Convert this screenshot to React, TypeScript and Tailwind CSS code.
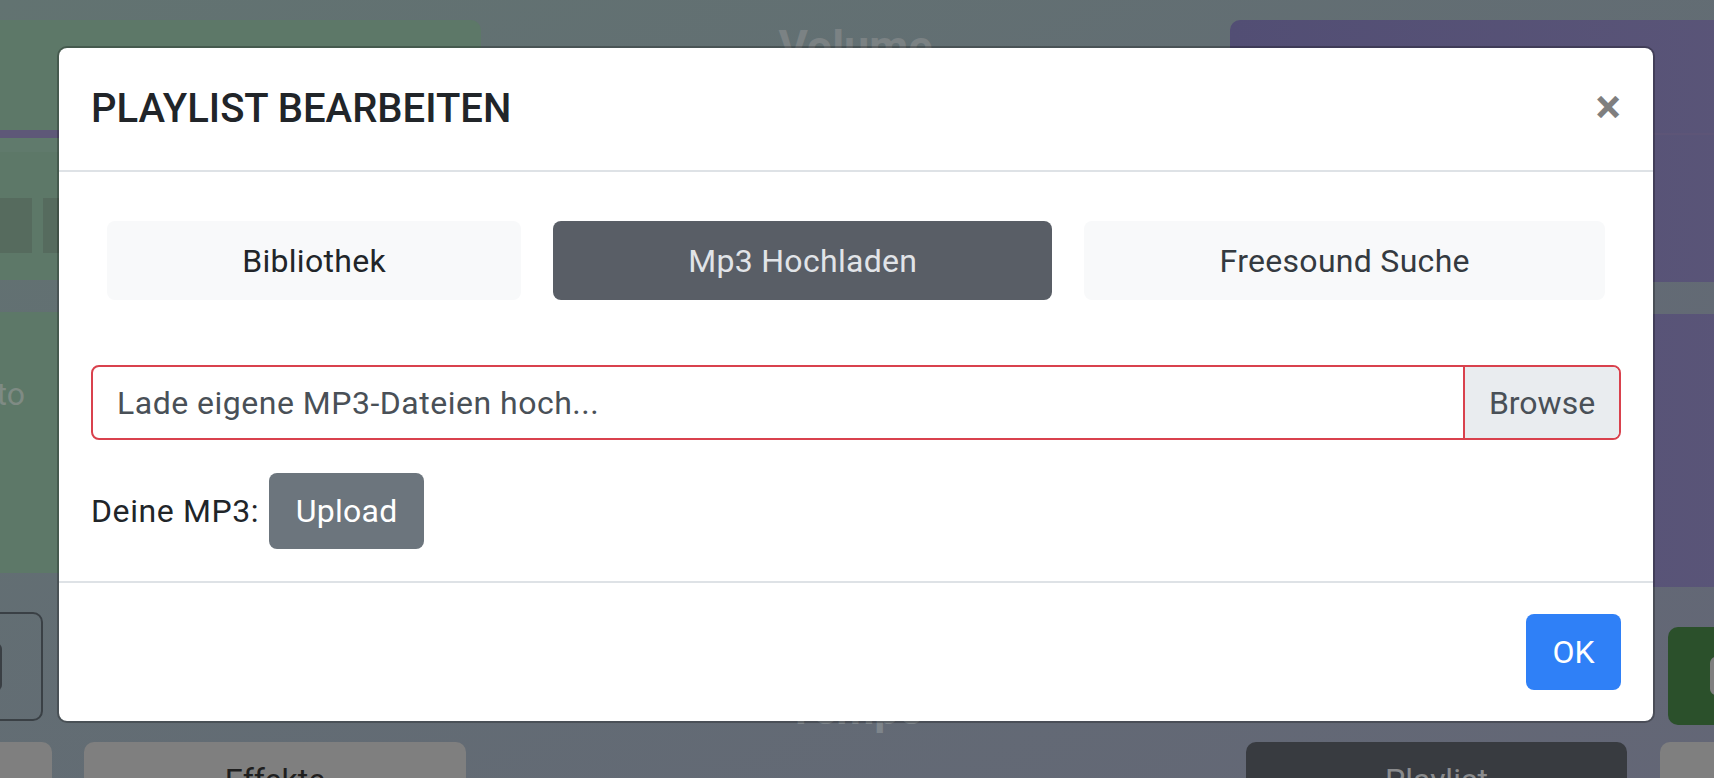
import React from "react";

function Background() {
  return (
    <div className="ml-[-10px] flex w-[1780px] pt-[20px]">
      {/* left column */}
      <div className="flex w-[491px] flex-col">
        <div className="flex h-[260px] flex-col rounded-tr-[10px] rounded-br-[10px] bg-[#5d7868]">
          <div className="mt-[110px] h-[8px] w-full bg-[#5e5878]" />
          <div className="h-[14px] w-full bg-[#607a6c]" />
          <div className="mt-[46px] flex gap-[11px]">
            <div className="h-[55px] w-[42px] bg-[#566b5e]" />
            <div className="h-[55px] w-[60px] bg-[#566b5e]" />
          </div>
        </div>
        <div className="mt-[32px] flex h-[261px] flex-col rounded-r-[10px] bg-[#5d7868]">
          <div className="mt-[66px] flex w-[35px] justify-end overflow-hidden">
            <span className="whitespace-nowrap text-[32px] leading-none text-[#7f8b84]">Auto</span>
          </div>
        </div>
        <div className="mt-[39px] flex h-[109px] w-[53px] items-center rounded-[10px] border-2 border-[#3a4045]">
          <div className="h-[48px] w-[10px] rounded-r-[6px] bg-[#3a3f44]" />
        </div>
        <div className="mt-[21px] flex gap-[32px]">
          <div className="h-[60px] w-[62px] rounded-[10px] bg-[#7f7f7f]" />
          <div className="flex h-[60px] w-[382px] justify-center rounded-[10px] bg-[#7f7f7f] pt-[22px] text-[32px] leading-none text-[#1f1f1f]">
            Effekte
          </div>
        </div>
      </div>
      {/* middle column */}
      <div className="flex w-[749px] flex-col items-center">
        <div className="mt-[4px] text-[45px] font-bold leading-none text-[#7b8284]">Volume</div>
        <div className="mt-[618px] text-[44px] font-bold leading-none text-[#7e858b]">Tempo</div>
      </div>
      {/* right column */}
      <div className="flex w-[540px] flex-col">
        <div className="flex h-[262px] flex-col rounded-tl-[10px] bg-gradient-to-r from-[#524e74] to-[#5a5578]">
          <div className="mt-[113px] h-[2px] w-full bg-[#5d5577]" />
        </div>
        <div className="mt-[32px] h-[273px] rounded-l-[10px] bg-gradient-to-r from-[#534f75] to-[#5a5578]" />
        <div className="ml-[438px] mt-[40px] flex h-[98px] w-[120px] items-center rounded-[10px] bg-[#2b502b] pl-[42px]">
          <div className="h-[38px] w-[30px] rounded-[6px] bg-[#7f7f7f]" />
        </div>
        <div className="mt-[17px] flex gap-[33px] pl-[16px]">
          <div className="flex h-[60px] w-[381px] justify-center rounded-[10px] bg-[#383b40] pt-[22px] text-[32px] leading-none text-[#8a8b8d]">
            Playlist
          </div>
          <div className="h-[60px] w-[90px] rounded-[10px] bg-[#7f7f7f]" />
        </div>
      </div>
    </div>
  );
}

function Modal() {
  return (
    <div className="absolute left-[57px] top-[46px] flex h-[677px] w-[1598px] flex-col rounded-[10px] border-2 border-black/25 bg-white bg-clip-padding">
      <div className="flex h-[122px] items-center justify-between px-[32px]">
        <h5 className="text-[40px] font-medium leading-none text-[#212529]">PLAYLIST BEARBEITEN</h5>
        <span className="mb-[4px] text-[48px] font-bold leading-none text-black/50">×</span>
      </div>
      <div className="h-[2px] bg-[#dee2e6]" />
      <div className="flex h-[409px] flex-col px-[32px] pt-[49px]">
        <div className="flex">
          <div className="mx-[16px] flex h-[79px] flex-auto items-center justify-center rounded-[8px] bg-[#f8f9fa] text-[32px] tracking-[0.3px] text-[#212529]">
            Bibliothek
          </div>
          <div className="mx-[16px] flex h-[79px] flex-auto items-center justify-center rounded-[8px] bg-[#595e66] text-[32px] tracking-[0.3px] text-[#e1e4e8]">
            Mp3 Hochladen
          </div>
          <div className="mx-[16px] flex h-[79px] flex-auto items-center justify-center rounded-[8px] bg-[#f8f9fa] text-[32px] tracking-[0.3px] text-[#343a40]">
            Freesound Suche
          </div>
        </div>
        <div className="mt-[65px] flex h-[75px] overflow-hidden rounded-[8px] border-2 border-[#d9414d]">
          <div className="flex flex-1 items-center pl-[24px] text-[32px] tracking-[0.5px] text-[#495057]">
            Lade eigene MP3-Dateien hoch...
          </div>
          <div className="flex w-[156px] items-center justify-center border-l-2 border-[#d9414d] bg-[#e9ecef] text-[32px] text-[#495057]">
            Browse
          </div>
        </div>
        <div className="mt-[33px] flex items-center gap-[10px]">
          <span className="text-[32px] tracking-[0.6px] text-[#212529]">Deine MP3:</span>
          <div className="flex h-[76px] w-[155px] items-center justify-center rounded-[8px] bg-[#6c757d] text-[32px] tracking-[0.3px] text-white">
            Upload
          </div>
        </div>
      </div>
      <div className="h-[2px] bg-[#dee2e6]" />
      <div className="flex flex-1 items-center justify-end px-[32px]">
        <div className="flex h-[76px] w-[95px] items-center justify-center rounded-[8px] bg-[#2f80f7] text-[32px] text-white">
          OK
        </div>
      </div>
    </div>
  );
}

export default function App() {
  return (
    <div className="relative h-[778px] w-full overflow-hidden bg-gradient-to-br from-[#627371] to-[#636676] font-['Roboto','Liberation_Sans',sans-serif]">
      <Background />
      <Modal />
    </div>
  );
}
